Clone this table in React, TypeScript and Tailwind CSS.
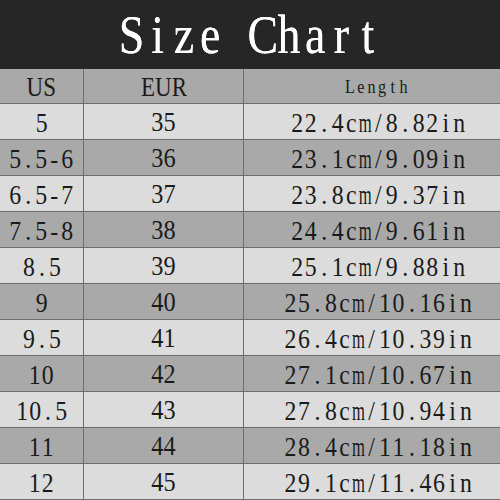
const rows: [string, string, string][] = [
  ["5", "35", "22.4cm/8.82in"],
  ["5.5-6", "36", "23.1cm/9.09in"],
  ["6.5-7", "37", "23.8cm/9.37in"],
  ["7.5-8", "38", "24.4cm/9.61in"],
  ["8.5", "39", "25.1cm/9.88in"],
  ["9", "40", "25.8cm/10.16in"],
  ["9.5", "41", "26.4cm/10.39in"],
  ["10", "42", "27.1cm/10.67in"],
  ["10.5", "43", "27.8cm/10.94in"],
  ["11", "44", "28.4cm/11.18in"],
  ["12", "45", "29.1cm/11.46in"],
];

// serif text set on a fixed pitch, like the half-width glyphs of the original
function Pitch({ text, cell }: { text: string; cell: string }) {
  return (
    <span className="inline-flex">
      {text.split("").map((ch, i) => (
        <span key={i} className={`${cell} inline-flex justify-center`}>
          <span className={ch === "m" ? "inline-block scale-x-[0.7]" : "inline-block"}>
            {ch === " " ? "\u00a0" : ch}
          </span>
        </span>
      ))}
    </span>
  );
}

export default function App() {
  return (
    <div className="h-[500px] w-[500px] overflow-hidden bg-[#dcdcdc] font-['Liberation_Serif',serif] text-[#1a1a1a]">
      <div className="flex h-[69px] items-center justify-center bg-[#262626] pt-[1px]">
        <h1 className="scale-x-[0.85] pr-[2px] text-[54px] leading-none text-white [text-shadow:0_0_0.6px_#fff]">
          <Pitch text="Size Chart" cell="w-[30.9px]" />
        </h1>
      </div>

      <div className="grid h-[35px] grid-cols-[84px_160px_1fr] border-b border-[#6e6e6e] bg-[#a9a9a9]">
        <div className="flex items-center justify-center border-r border-[#6e6e6e] pt-[2px] text-[27px] leading-none">
          <span className="scale-x-[0.85]">US</span>
        </div>
        <div className="flex items-center justify-center border-r border-[#6e6e6e] pt-[2px] text-[27px] leading-none">
          <span className="scale-x-[0.85]">EUR</span>
        </div>
        <div className="flex items-center justify-center pl-[10px] text-[19px] leading-none">
          <span className="scale-x-[0.85]">
            <Pitch text="Length" cell="w-[12.6px]" />
          </span>
        </div>
      </div>

      {rows.map(([us, eur, len], i) => (
        <div
          key={us}
          className={`grid h-[36px] grid-cols-[84px_160px_1fr] border-b border-[#6e6e6e] ${
            i % 2 === 0 ? "bg-[#dcdcdc]" : "bg-[#a9a9a9]"
          }`}
        >
          <div className="flex items-center justify-center border-r border-[#6e6e6e] pt-[2px] text-[28px] leading-none">
            <span className="scale-x-[0.85]">
              <Pitch text={us} cell="w-[15.3px]" />
            </span>
          </div>
          <div className="flex items-center justify-center border-r border-[#6e6e6e] pt-[2px] text-[27px] leading-none">
            <span className="scale-x-[0.9]">{eur}</span>
          </div>
          <div className="flex items-center justify-center pl-[12px] pt-[2px] text-[28px] leading-none">
            <span className="scale-x-[0.85]">
              <Pitch text={len} cell="w-[15.9px]" />
            </span>
          </div>
        </div>
      ))}
    </div>
  );
}
